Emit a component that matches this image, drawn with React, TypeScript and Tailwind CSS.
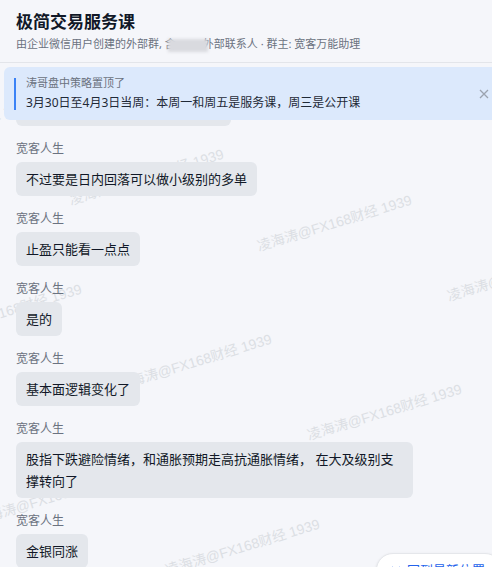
import React from "react";

const font = { fontFamily: '"Noto Sans", "Noto Sans CJK SC", sans-serif' };

const marks: [number, number][] = [
  [-118, 158],
  [72, 208],
  [260, 254],
  [450, 304],
  [-70, 343],
  [120, 393],
  [310, 443],
  [-22, 528],
  [168, 578],
];

const messages = [
  "今天的行情主要还是看美元的走势",
  "不过要是日内回落可以做小级别的多单",
  "止盈只能看一点点",
  "是的",
  "基本面逻辑变化了",
  "股指下跌避险情绪，和通胀预期走高抗通胀情绪， 在大及级别支撑转向了",
  "金银同涨",
];

export default function App() {
  return (
    <div
      className="relative w-[492px] h-[567px] overflow-hidden bg-[#f5f6fa] flex flex-col"
      style={font}
    >
      <header className="shrink-0 h-[63px] border-b border-[#e3e5ea] px-4 pt-[10px]">
        <h1 className="text-[17px] leading-[24px] font-bold text-[#111827]">极简交易服务课</h1>
        <p className="mt-[2px] text-[11px] leading-[16px] text-[#6b7280] whitespace-nowrap">
          由企业微信用户创建的外部群, 含
          <span className="relative inline-block align-middle w-[40px] h-[13px] -ml-[8px] -mr-[5px] bg-[#d9dadf] blur-[1.5px]" />
          外部联系人 · 群主: 宽客万能助理
        </p>
      </header>

      <main className="relative flex-1 overflow-hidden">
        <div className="absolute inset-0">
          {marks.map(([x, y], i) => (
            <span
              key={i}
              className="absolute whitespace-nowrap text-[14px] leading-[16px] text-[#dcdfe4] origin-bottom-left rotate-[-17deg]"
              style={{ left: x, top: y - 63 - 16, fontFamily: '"Liberation Sans", "Noto Sans CJK SC", sans-serif' }}
            >
              凌海涛@FX168财经 1939
            </span>
          ))}
        </div>

        <div className="relative flex flex-col px-4 pt-[7px]">
          {messages.map((m, i) => (
            <div key={i} className="flex flex-col items-start mb-[14px]">
              <div className="text-[12px] leading-[18px] text-[#6b7280]">宽客人生</div>
              <div className="mt-[4px] max-w-[397px] rounded-[6px] bg-[#e4e7ec] px-[10px] py-[6px] text-[13px] leading-[22px] text-[#111827]">
                {m}
              </div>
            </div>
          ))}
        </div>

        <div className="absolute left-[4px] right-0 top-[4px] h-[53px] rounded-l-[6px] bg-[#dce9fc] flex items-center">
          <div className="ml-[10px] w-[2px] h-[32px] bg-[#3b82f6]" />
          <div className="ml-[10px] flex flex-col">
            <div className="text-[11px] leading-[16px] text-[#6b7280]">涛哥盘中策略置顶了</div>
            <div className="mt-[3px] text-[12px] leading-[18px] text-[#1f2937]">
              3月30日至4月3日当周：本周一和周五是服务课，周三是公开课
            </div>
          </div>
          <svg
            className="absolute right-[3px] top-[22px]"
            width="10"
            height="10"
            viewBox="0 0 10 10"
            fill="none"
            stroke="#9ca3af"
            strokeWidth="1.3"
          >
            <path d="M1 1L9 9M9 1L1 9" />
          </svg>
        </div>
      </main>

      <div className="absolute left-[376px] top-[553px] h-[34px] pl-[14px] pr-[16px] rounded-full bg-white border border-[#e5e7eb] shadow-sm flex items-start pt-[8px] gap-[6px]">
        <svg className="mt-[2px]" width="10" height="10" viewBox="0 0 10 10" fill="none" stroke="#2563eb" strokeWidth="1.3">
          <path d="M1 3L5 7L9 3" />
        </svg>
        <span className="text-[13px] leading-[16px] text-[#2563eb] whitespace-nowrap">回到最新位置</span>
      </div>
    </div>
  );
}
